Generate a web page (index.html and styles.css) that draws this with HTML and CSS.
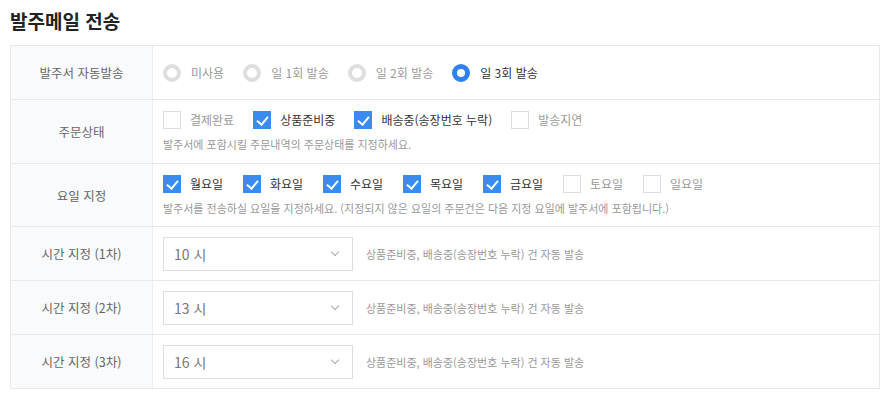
FILE: index.html
```html
<!DOCTYPE html>
<html lang="ko">
<head>
    <meta charset="UTF-8">
    <meta name="viewport" content="width=device-width, initial-scale=1.0">
    <title>발주메일 전송</title>
    <link rel="stylesheet" href="styles.css">
</head>
<body>
    <h2 class="page-title">발주메일 전송</h2>

    <div class="setting-table">
        <!-- 자동발송 -->
        <div class="setting-row row-first">
            <div class="setting-label">발주서 자동발송</div>
            <div class="setting-value">
                <div class="option-line">
                    <label class="opt"><span class="radio"></span><span class="opt-text">미사용</span></label>
                    <label class="opt"><span class="radio"></span><span class="opt-text">일 1회 발송</span></label>
                    <label class="opt"><span class="radio"></span><span class="opt-text">일 2회 발송</span></label>
                    <label class="opt on"><span class="radio"></span><span class="opt-text">일 3회 발송</span></label>
                </div>
            </div>
        </div>

        <!-- 주문상태 -->
        <div class="setting-row row-tall">
            <div class="setting-label">주문상태</div>
            <div class="setting-value">
                <div class="option-line">
                    <label class="opt"><span class="check"></span><span class="opt-text">결제완료</span></label>
                    <label class="opt on"><span class="check"></span><span class="opt-text">상품준비중</span></label>
                    <label class="opt on"><span class="check"></span><span class="opt-text">배송중(송장번호 누락)</span></label>
                    <label class="opt"><span class="check"></span><span class="opt-text">발송지연</span></label>
                </div>
                <p class="help">발주서에 포함시킬 주문내역의 주문상태를 지정하세요.</p>
            </div>
        </div>

        <!-- 요일 -->
        <div class="setting-row row-tall days-row">
            <div class="setting-label">요일 지정</div>
            <div class="setting-value">
                <div class="option-line days">
                    <label class="opt on"><span class="check"></span><span class="opt-text">월요일</span></label>
                    <label class="opt on"><span class="check"></span><span class="opt-text">화요일</span></label>
                    <label class="opt on"><span class="check"></span><span class="opt-text">수요일</span></label>
                    <label class="opt on"><span class="check"></span><span class="opt-text">목요일</span></label>
                    <label class="opt on"><span class="check"></span><span class="opt-text">금요일</span></label>
                    <label class="opt"><span class="check"></span><span class="opt-text">토요일</span></label>
                    <label class="opt"><span class="check"></span><span class="opt-text">일요일</span></label>
                </div>
                <p class="help">발주서를 전송하실 요일을 지정하세요. (지정되지 않은 요일의 주문건은 다음 지정 요일에 발주서에 포함됩니다.)</p>
            </div>
        </div>

        <!-- 시간 -->
        <div class="setting-row row-short">
            <div class="setting-label">시간 지정 (1차)</div>
            <div class="setting-value inline">
                <div class="select-box">10 시<span class="chevron"></span></div>
                <span class="note">상품준비중, 배송중(송장번호 누락) 건 자동 발송</span>
            </div>
        </div>
        <div class="setting-row row-short">
            <div class="setting-label">시간 지정 (2차)</div>
            <div class="setting-value inline">
                <div class="select-box">13 시<span class="chevron"></span></div>
                <span class="note">상품준비중, 배송중(송장번호 누락) 건 자동 발송</span>
            </div>
        </div>
        <div class="setting-row row-short">
            <div class="setting-label">시간 지정 (3차)</div>
            <div class="setting-value inline">
                <div class="select-box">16 시<span class="chevron"></span></div>
                <span class="note">상품준비중, 배송중(송장번호 누락) 건 자동 발송</span>
            </div>
        </div>
    </div>
</body>
</html>
```

FILE: styles.css
```css
/* Reset */
* {
    margin: 0;
    padding: 0;
    box-sizing: border-box;
    font-family: "Noto Sans CJK KR", "Noto Sans", sans-serif;
}

body {
    background: #fff;
    color: #333;
    padding: 8px 6px 0 10px;
}

.page-title {
    font-size: 19px;
    font-weight: bold;
    color: #222;
    line-height: 26px;
    margin-bottom: 11px;
}

/* Table */
.setting-table {
    width: 870px;
    border: 1px solid #e9e9e9;
}

.setting-row {
    display: grid;
    grid-template-columns: 142px 1fr;
    border-top: 1px solid #e9e9e9;
}

.setting-row.row-first {
    border-top: none;
    height: 53px;
}

.row-short {
    height: 54px;
}

.row-tall {
    height: 64px;
}

.row-tall.days-row {
    height: 63px;
}

.setting-label {
    background: #f9fafb;
    border-right: 1px solid #eeeeee;
    color: #666;
    font-size: 12.5px;
    display: flex;
    align-items: center;
    justify-content: center;
}

.setting-value {
    padding: 0 10px;
    display: flex;
    flex-direction: column;
    justify-content: center;
}

.setting-value.inline {
    flex-direction: row;
    align-items: center;
    justify-content: flex-start;
}

/* Options */
.option-line {
    display: flex;
    align-items: center;
}

.opt {
    display: flex;
    align-items: center;
    margin-right: 19px;
    font-size: 12px;
    color: #9a9a9a;
    line-height: 18px;
}

.opt.on {
    color: #333;
}

.opt-text {
    margin-left: 9px;
}

.days .opt {
    width: 61px;
}

.radio {
    width: 18px;
    height: 18px;
    border-radius: 50%;
    border: 4px solid #dedede;
    background: #fff;
}

.opt.on .radio {
    border: 5px solid #2f80f0;
}

.opt .radio + .opt-text {
    margin-left: 10px;
}

.check {
    width: 18px;
    height: 18px;
    border: 1px solid #dddddd;
    background: #fff;
    position: relative;
}

.opt.on .check {
    background: #3a8bef;
    border-color: #3a8bef;
}

.opt.on .check::after {
    content: "";
    position: absolute;
    left: 5px;
    top: 2px;
    width: 5px;
    height: 9px;
    border-right: 2px solid #fff;
    border-bottom: 2px solid #fff;
    transform: rotate(40deg);
}

.help {
    font-size: 11px;
    color: #999;
    margin-top: 7px;
    line-height: 16px;
}

/* Select */
.select-box {
    width: 190px;
    height: 34px;
    border: 1px solid #dddddd;
    background: #fff;
    color: #777;
    font-size: 14px;
    padding: 0 10px;
    display: flex;
    align-items: center;
    justify-content: space-between;
}

.chevron {
    width: 6px;
    height: 6px;
    border-right: 1px solid #aaa;
    border-bottom: 1px solid #aaa;
    transform: rotate(45deg);
    margin: -3px 4px 0 0;
}

.note {
    margin-left: 13px;
    font-size: 11px;
    color: #999;
}
```
